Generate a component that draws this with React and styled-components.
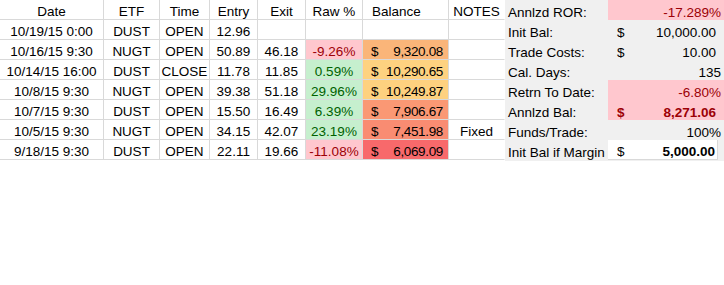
import React from 'react'
import styled, { createGlobalStyle } from 'styled-components'

const Global = createGlobalStyle`
  html, body {
    margin: 0;
    padding: 0;
    background: #ffffff;
  }
  body {
    font-family: "Liberation Sans", Arial, sans-serif;
    font-size: 13.5px;
    color: #000;
  }
`

const Sheet = styled.div`
  display: flex;
  width: 724px;
  align-items: flex-start;
`

const Table = styled.div`
  display: grid;
  grid-template-columns: 104px 56px 50px 48px 48px 57px 86px 56px;
  grid-auto-rows: 20px;
  width: 505px;
`

const Cell = styled.div`
  box-sizing: border-box;
  border-right: 1px solid ${p => (p.$last ? 'transparent' : '#d9d9d9')};
  border-bottom: 1px solid #d9d9d9;
  display: flex;
  align-items: flex-end;
  justify-content: ${p => p.$align || 'center'};
  padding: ${p => p.$pad || '0'};
  line-height: 15px;
  white-space: nowrap;
  overflow: hidden;
  background: ${p => p.$bg || 'transparent'};
  color: ${p => p.$color || '#000'};
`

const Money = styled(Cell)`
  justify-content: space-between;
  padding: 0 5px 0 8px;
  letter-spacing: -0.35px;
`

const Panel = styled.div`
  display: grid;
  grid-template-columns: 103px 116px;
  grid-auto-rows: 20px;
  width: 219px;
  background: #f0f0f0;
  padding-bottom: 1px;
`

const Label = styled.div`
  display: flex;
  align-items: flex-end;
  padding-left: 3px;
  line-height: 15px;
  white-space: nowrap;
  overflow: hidden;
`

const Value = styled.div`
  box-sizing: border-box;
  display: flex;
  align-items: flex-end;
  justify-content: ${p => (p.$dollar ? 'space-between' : 'flex-end')};
  padding: ${p => (p.$dollar ? '0 8px 0 9px' : '0 3px 0 9px')};
  line-height: 15px;
  background: ${p => p.$bg || 'transparent'};
  color: ${p => p.$color || '#000'};
  font-weight: ${p => (p.$bold ? 700 : 400)};
  white-space: nowrap;
`

const Boxed = styled(Value)`
  background: #ffffff;
  margin-right: 6px;
  border-right: 1px solid #d9d9d9;
  border-bottom: 1px solid #d9d9d9;
  padding: 0 2px 0 9px;
`

const RED_BG = '#ffc7ce'
const RED_FG = '#9c0006'
const GREEN_BG = '#c6efce'
const GREEN_FG = '#006100'

const trades = [
  { date: '10/19/15 0:00', etf: 'DUST', time: 'OPEN', entry: '12.96', exit: '', raw: '', bal: '' },
  { date: '10/16/15 9:30', etf: 'NUGT', time: 'OPEN', entry: '50.89', exit: '46.18', raw: '-9.26%', bal: '9,320.08', shade: '#fab579' },
  { date: '10/14/15 16:00', etf: 'DUST', time: 'CLOSE', entry: '11.78', exit: '11.85', raw: '0.59%', bal: '10,290.65', shade: '#fed280' },
  { date: '10/8/15 9:30', etf: 'NUGT', time: 'OPEN', entry: '39.38', exit: '51.18', raw: '29.96%', bal: '10,249.87', shade: '#fed17f' },
  { date: '10/7/15 9:30', etf: 'DUST', time: 'OPEN', entry: '15.50', exit: '16.49', raw: '6.39%', bal: '7,906.67', shade: '#fa9874' },
  { date: '10/5/15 9:30', etf: 'NUGT', time: 'OPEN', entry: '34.15', exit: '42.07', raw: '23.19%', bal: '7,451.98', shade: '#f98c72', note: 'Fixed' },
  { date: '9/18/15 9:30', etf: 'DUST', time: 'OPEN', entry: '22.11', exit: '19.66', raw: '-11.08%', bal: '6,069.09', shade: '#f8696b' },
]

const rawColors = raw => {
  if (!raw) return {}
  return raw.startsWith('-') ? { $bg: RED_BG, $color: RED_FG } : { $bg: GREEN_BG, $color: GREEN_FG }
}

export default function App() {
  return (
    <>
      <Global />
      <Sheet>
        <Table>
          <Cell>Date</Cell>
          <Cell>ETF</Cell>
          <Cell>Time</Cell>
          <Cell>Entry</Cell>
          <Cell>Exit</Cell>
          <Cell>Raw %</Cell>
          <Cell $align="flex-start" $pad="0 0 0 9px">Balance</Cell>
          <Cell $last>NOTES</Cell>
          {trades.map(t => (
            <React.Fragment key={t.date}>
              <Cell>{t.date}</Cell>
              <Cell>{t.etf}</Cell>
              <Cell>{t.time}</Cell>
              <Cell>{t.entry}</Cell>
              <Cell>{t.exit}</Cell>
              <Cell {...rawColors(t.raw)}>{t.raw}</Cell>
              {t.bal ? (
                <Money $bg={t.shade}>
                  <span>$</span>
                  <span>{t.bal}</span>
                </Money>
              ) : (
                <Cell />
              )}
              <Cell $last>{t.note || ''}</Cell>
            </React.Fragment>
          ))}
        </Table>
        <Panel>
          <Label>Annlzd ROR:</Label>
          <Value $bg={RED_BG} $color={RED_FG}>-17.289%</Value>
          <Label>Init Bal:</Label>
          <Value $dollar><span>$</span><span>10,000.00</span></Value>
          <Label>Trade Costs:</Label>
          <Value $dollar><span>$</span><span>10.00</span></Value>
          <Label>Cal. Days:</Label>
          <Value>135</Value>
          <Label>Retrn To Date:</Label>
          <Value $bg={RED_BG} $color={RED_FG}>-6.80%</Value>
          <Label>Annlzd Bal:</Label>
          <Value $dollar $bold $bg={RED_BG} $color={RED_FG}><span>$</span><span>8,271.06</span></Value>
          <Label>Funds/Trade:</Label>
          <Value>100%</Value>
          <Label>Init Bal if Margin</Label>
          <Boxed $dollar $bold><span style={{ fontWeight: 400 }}>$</span><span>5,000.00</span></Boxed>
        </Panel>
      </Sheet>
    </>
  )
}
